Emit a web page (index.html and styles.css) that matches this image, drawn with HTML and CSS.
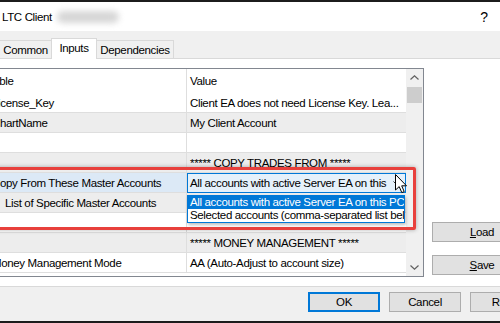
FILE: index.html
```html
<!DOCTYPE html>
<html lang="en">
<head>
    <meta charset="UTF-8">
    <meta name="viewport" content="width=device-width, initial-scale=1.0">
    <title>LTC Client</title>
    <link rel="stylesheet" href="styles.css">
</head>
<body>
    <div class="window">
        <div class="top-edge"></div>

        <div class="titlebar">
            <span class="title">LTC Client</span>
            <span class="title-blur"></span>
            <span class="help">?</span>
        </div>

        <div class="tabs">
            <div class="tab">Common</div>
            <div class="tab active">Inputs</div>
            <div class="tab">Dependencies</div>
        </div>

        <div class="page">
            <div class="grid">
                <div class="rows">
                    <div class="row head">
                        <div class="name">Variable</div>
                        <div class="value">Value</div>
                    </div>
                    <div class="row">
                        <div class="name">License_Key</div>
                        <div class="value">Client EA does not need License Key. Lea...</div>
                    </div>
                    <div class="row alt">
                        <div class="name">ChartName</div>
                        <div class="value">My Client Account</div>
                    </div>
                    <div class="row">
                        <div class="name"></div>
                        <div class="value"></div>
                    </div>
                    <div class="row alt">
                        <div class="name"></div>
                        <div class="value">***** COPY TRADES FROM *****</div>
                    </div>
                    <div class="row selected">
                        <div class="name">Copy From These Master Accounts</div>
                        <div class="value">
                            <div class="combo">
                                <span class="combo-text">All accounts with active Server EA on this PC</span>
                                <span class="combo-arrow">
                                    <svg width="8" height="5" viewBox="0 0 8 5"><path d="M0.5 0.5 L4 4 L7.5 0.5" fill="none" stroke="#333" stroke-width="1"/></svg>
                                </span>
                            </div>
                            <div class="dropdown">
                                <div class="option current">All accounts with active Server EA on this PC</div>
                                <div class="option">Selected accounts (comma-separated list below)</div>
                            </div>
                            <svg class="cursor" width="13" height="20" viewBox="0 0 13 20">
                                <path d="M0.5 0.5 L0.5 16 L4.2 12.6 L6.8 18.6 L9.2 17.6 L6.7 11.8 L11.5 11.8 Z" fill="#fff" stroke="#000" stroke-width="1" stroke-linejoin="round"/>
                            </svg>
                        </div>
                    </div>
                    <div class="row alt">
                        <div class="name shifted">List of Specific Master Accounts</div>
                        <div class="value"></div>
                    </div>
                    <div class="row">
                        <div class="name"></div>
                        <div class="value"></div>
                    </div>
                    <div class="row alt">
                        <div class="name"></div>
                        <div class="value">***** MONEY MANAGEMENT *****</div>
                    </div>
                    <div class="row">
                        <div class="name">Money Management Mode</div>
                        <div class="value">AA (Auto-Adjust to account size)</div>
                    </div>
                </div>

                <div class="scrollbar">
                    <div class="sb-btn">
                        <svg width="9" height="5" viewBox="0 0 9 5"><path d="M0.5 4.5 L4.5 0.8 L8.5 4.5" fill="none" stroke="#606060" stroke-width="1.2"/></svg>
                    </div>
                    <div class="sb-track">
                        <div class="sb-thumb"></div>
                    </div>
                    <div class="sb-btn">
                        <svg width="9" height="5" viewBox="0 0 9 5"><path d="M0.5 0.5 L4.5 4.2 L8.5 0.5" fill="none" stroke="#606060" stroke-width="1.2"/></svg>
                    </div>
                </div>

                <div class="highlight"></div>
            </div>

            <div class="side">
                <button class="btn"><u>L</u>oad</button>
                <button class="btn"><u>S</u>ave</button>
            </div>
        </div>

        <div class="footer">
            <button class="btn default">OK</button>
            <button class="btn">Cancel</button>
            <button class="btn">Reset</button>
        </div>

        <div class="bottom-edge"></div>
    </div>
</body>
</html>
```

FILE: styles.css
```css
body {
    margin: 0;
    width: 500px;
    height: 323px;
    overflow: hidden;
    font-family: 'Liberation Sans', Arial, sans-serif;
    font-size: 11.5px;
    letter-spacing: -0.35px;
    color: #000;
    background: #f0f0f0;
}

.window {
    display: flex;
    flex-direction: column;
    height: 323px;
}

.top-edge {
    height: 2px;
    background: #1c1c1c;
}

.titlebar {
    height: 29px;
    display: flex;
    align-items: center;
    background: #fff;
}

.title {
    margin-left: 2px;
}

.title-blur {
    width: 62px;
    height: 12px;
    margin-left: 5px;
    background: #d6d6d6;
    border-radius: 6px;
    filter: blur(3px);
}

.help {
    margin-left: auto;
    margin-right: 12px;
    font-size: 14px;
    letter-spacing: 0;
}

/* tab strip */
.tabs {
    height: 27px;
    display: flex;
    align-items: flex-end;
    background: #f0f0f0;
    position: relative;
    z-index: 1;
}

.tab {
    height: 18px;
    line-height: 18px;
    text-align: center;
    border: 1px solid #d9d9d9;
    border-bottom: none;
    box-sizing: border-box;
    background: #f0f0f0;
}

.tab:nth-child(1) {
    width: 52px;
    margin-left: -1px;
    border-right: none;
}

.tab:nth-child(3) {
    width: 77px;
    border-left: none;
}

.tab.active {
    width: 46px;
    height: 21px;
    line-height: 18px;
    margin-bottom: -1px;
    background: #fff;
}

/* tab page */
.page {
    height: 227px;
    display: flex;
    align-items: flex-start;
    background: #fff;
    border-top: 1px solid #d9d9d9;
    border-bottom: 1px solid #d9d9d9;
}

.grid {
    position: relative;
    flex-shrink: 0;
    margin-top: 9px;
    margin-left: -60px;
    width: 484px;
    height: 209px;
    box-sizing: border-box;
    border: 1px solid #828790;
    display: flex;
}

.rows {
    width: 465px;
    flex: none;
}

.row {
    display: flex;
    height: 20px;
    line-height: 20px;
    border-bottom: 1px solid #dedede;
    box-sizing: border-box;
    white-space: nowrap;
}

.row.head {
    height: 24px;
    line-height: 25px;
    border-bottom: none;
}

.row.alt {
    background: #ededed;
}

.name {
    width: 246px;
    flex: none;
    padding-left: 51px;
    box-sizing: border-box;
    border-right: 1px solid #dedede;
    overflow: hidden;
}

.head .name {
    padding-left: 34px;
}

.name.shifted {
    padding-left: 64px;
}

.value {
    width: 219px;
    flex: none;
    position: relative;
    padding-left: 3px;
    box-sizing: border-box;
    overflow: visible;
}

.row.selected .name {
    background: #dce9f6;
}

.combo {
    position: absolute;
    left: 0;
    top: 0;
    width: 219px;
    height: 20px;
    display: flex;
    align-items: center;
    background: #e5f1fb;
    border: 1px solid #0078d7;
    box-sizing: border-box;
}

.combo-text {
    flex: 1;
    padding-left: 2px;
    overflow: hidden;
    white-space: nowrap;
}

.combo-arrow {
    width: 16px;
    flex: none;
    display: flex;
    justify-content: center;
}

.dropdown {
    position: absolute;
    left: 0;
    top: 22px;
    width: 218px;
    box-sizing: border-box;
    border: 1px solid #0078d7;
    background: #fff;
    box-shadow: 1px 2px 3px rgba(0, 0, 0, 0.25);
    z-index: 2;
}

.option {
    height: 13px;
    line-height: 13px;
    padding-left: 2px;
    overflow: hidden;
    white-space: nowrap;
}

.option.current {
    background: #0078d7;
    color: #fff;
}

.cursor {
    position: absolute;
    left: 208px;
    top: 1px;
    z-index: 3;
}

.scrollbar {
    width: 17px;
    flex: none;
    display: flex;
    flex-direction: column;
    background: #f0f0f0;
}

.sb-btn {
    height: 17px;
    display: flex;
    align-items: center;
    justify-content: center;
}

.sb-track {
    flex: 1;
    padding: 1px 1px 0 1px;
}

.sb-thumb {
    height: 16px;
    background: #cdcdcd;
}

.highlight {
    position: absolute;
    left: 40px;
    right: 7px;
    top: 98px;
    height: 63px;
    border: 3px solid #e8403c;
    border-radius: 2px;
    box-sizing: border-box;
    box-shadow: 0 0 4px rgba(0, 0, 0, 0.3);
    z-index: 4;
}

/* side buttons */
.side {
    display: flex;
    flex-direction: column;
    gap: 13px;
    margin-top: 163px;
    margin-left: 8px;
}

.btn {
    width: 100px;
    height: 20px;
    padding: 0;
    font-family: 'Liberation Sans', Arial, sans-serif;
    font-size: 11.5px;
    letter-spacing: -0.35px;
    color: #000;
    background: #e1e1e1;
    border: 1px solid #adadad;
    box-sizing: border-box;
}

.footer {
    height: 34px;
    display: flex;
    align-items: flex-start;
    padding-top: 5px;
    padding-left: 308px;
    gap: 9px;
    box-sizing: border-box;
}

.footer .btn {
    width: 72px;
    flex-shrink: 0;
}

.btn.default {
    border: 2px solid #0078d7;
}

.bottom-edge {
    height: 2px;
    background: #1c1c1c;
}
```
